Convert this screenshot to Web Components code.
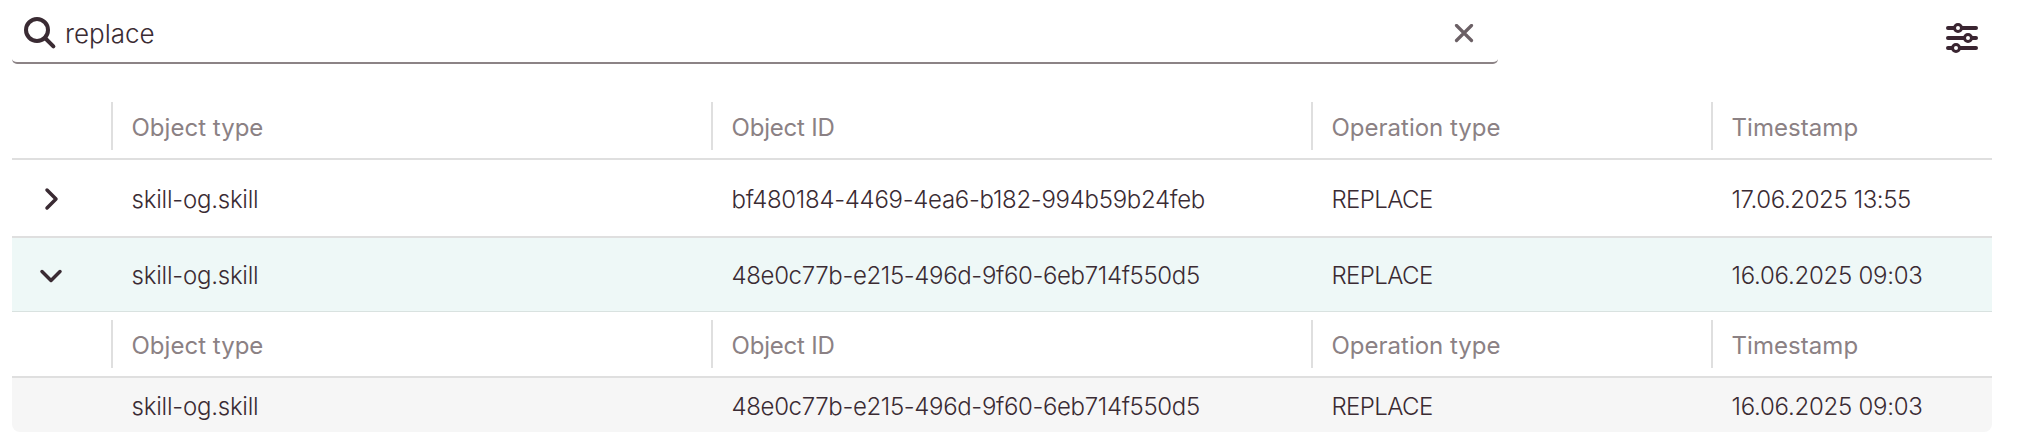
<!DOCTYPE html>
<html lang="en">
<head>
<meta charset="utf-8">
<title>Operations</title>
<style>
  body {
    margin: 0;
    padding: 0 26px 0 12px;
    background: #fff;
    color: #3a2b33;
    font: 350 24px/32px Inter, "Liberation Sans", sans-serif;
  }
</style>
</head>
<body>
<log-toolbar>
  <search-field>replace</search-field>
</log-toolbar>

<log-table>
  <log-header></log-header>
  <log-row state="closed">
    <log-text slot="type" style="--track: -0.22px">skill-og.skill</log-text>
    <log-text slot="id" style="--track: -0.29px">bf480184-4469-4ea6-b182-994b59b24feb</log-text>
    <log-text slot="operation" style="--track: -0.6px">REPLACE</log-text>
    <log-text slot="time" style="--track: -0.4px">17.06.2025 13:55</log-text>
  </log-row>
  <log-row state="open">
    <log-text slot="type" style="--track: -0.22px">skill-og.skill</log-text>
    <log-text slot="id" style="--track: -0.35px">48e0c77b-e215-496d-9f60-6eb714f550d5</log-text>
    <log-text slot="operation" style="--track: -0.6px">REPLACE</log-text>
    <log-text slot="time" style="--track: -0.25px">16.06.2025 09:03</log-text>
  </log-row>
  <log-header nested></log-header>
  <log-row nested>
    <log-text slot="type" style="--track: -0.22px">skill-og.skill</log-text>
    <log-text slot="id" style="--track: -0.35px">48e0c77b-e215-496d-9f60-6eb714f550d5</log-text>
    <log-text slot="operation" style="--track: -0.6px">REPLACE</log-text>
    <log-text slot="time" style="--track: -0.25px">16.06.2025 09:03</log-text>
  </log-row>
</log-table>

<script>
// Shared column widths for headers and rows
const columns = "99px 600px 600px 400px 1fr";

class SearchField extends HTMLElement {
  connectedCallback() {
    const shadow = this.attachShadow({ mode: "open" });
    shadow.innerHTML = `
      <style>
        :host {
          display: flex;
          align-items: center;
          box-sizing: border-box;
          width: 1486px;
          height: 64px;
          padding: 6px 24px 0 10px;
          border-bottom: 2px solid #8c8386;
          border-radius: 0 0 5px 5px;
        }

        .value {
          flex: 1;
          padding-left: 7px;
          font-size: 26px;
          font-weight: 300;
          letter-spacing: 0;
        }

        svg {
          display: block;
          fill: none;
          stroke-linecap: round;
        }

        .search {
          stroke: #3a2b33;
          stroke-width: 4;
        }

        .clear {
          stroke: #6b6065;
          stroke-width: 3.2;
        }
      </style>
      <svg class="search" width="36" height="36" viewBox="0 0 36 36">
        <circle cx="15" cy="14" r="11"/>
        <path d="M23 22L31.4 30.4"/>
      </svg>
      <span class="value"><slot></slot></span>
      <svg class="clear" width="20" height="20" viewBox="0 0 20 20">
        <path d="M2.5 1.5L17.5 16.5M17.5 1.5L2.5 16.5"/>
      </svg>
    `;
  }
}

class LogToolbar extends HTMLElement {
  connectedCallback() {
    const shadow = this.attachShadow({ mode: "open" });
    shadow.innerHTML = `
      <style>
        :host {
          display: flex;
          justify-content: space-between;
          align-items: center;
          height: 64px;
          margin-bottom: 30px;
          padding-right: 12px;
        }

        svg {
          display: block;
          margin-top: 12px;
          fill: #fff;
          stroke: #3a2531;
          stroke-width: 4;
          stroke-linecap: round;
        }

        circle {
          stroke-width: 3;
        }
      </style>
      <slot></slot>
      <svg width="36" height="32" viewBox="0 0 36 32">
        <path d="M4 6H32M4 16H32M4 26H32"/>
        <circle cx="14" cy="6" r="3.5"/>
        <circle cx="24" cy="16" r="3.5"/>
        <circle cx="12" cy="26" r="3.5"/>
      </svg>
    `;
  }
}

class LogTable extends HTMLElement {
  connectedCallback() {
    const shadow = this.attachShadow({ mode: "open" });
    shadow.innerHTML = `
      <style>
        :host {
          display: flex;
          flex-direction: column;
        }
      </style>
      <slot></slot>
    `;
  }
}

class LogHeader extends HTMLElement {
  connectedCallback() {
    const shadow = this.attachShadow({ mode: "open" });
    shadow.innerHTML = `
      <style>
        :host {
          display: grid;
          grid-template-columns: ${columns};
          align-items: center;
          box-sizing: border-box;
          height: 66px;
          border-bottom: 2px solid #dfdfdf;
          color: #8b8184;
          font-weight: 400;
        }

        .title {
          box-sizing: border-box;
          height: 48px;
          padding: 10px 0 0 18.5px;
          border-left: 2px solid #dfdfdf;
          line-height: 32px;
          white-space: nowrap;
        }
      </style>
      <span></span>
      <span class="title" style="letter-spacing: 0.02px">Object type</span>
      <span class="title" style="letter-spacing: -0.2px">Object ID</span>
      <span class="title" style="letter-spacing: 0">Operation type</span>
      <span class="title" style="letter-spacing: 0.06px">Timestamp</span>
    `;
  }
}

class LogRow extends HTMLElement {
  connectedCallback() {
    const shadow = this.attachShadow({ mode: "open" });
    const arrows = {
      closed: "M11 7L20 16L11 25",
      open: "M6 12.5L15 21.5L24 12.5"
    };
    const arrow = arrows[this.getAttribute("state")];
    shadow.innerHTML = `
      <style>
        :host {
          display: grid;
          grid-template-columns: ${columns};
          align-items: center;
          box-sizing: border-box;
          height: 78px;
          padding-top: 2px;
          border-bottom: 2px solid #dfdfdf;
        }

        :host([state="open"]) {
          height: 74px;
          padding-top: 0;
          background: #eef8f7;
          border-bottom: 1px solid #d9e2e0;
        }

        :host([nested]) {
          height: 54px;
          background: #f6f6f6;
          border: 0;
          border-radius: 0 0 8px 8px;
        }

        .toggle {
          padding-left: 24px;
        }

        svg {
          display: block;
          fill: none;
          stroke: #3a2b33;
          stroke-width: 3.5;
          stroke-linecap: round;
          stroke-linejoin: round;
        }
      </style>
      <span class="toggle">${arrow ? `<svg width="32" height="32" viewBox="0 0 32 32"><path d="${arrow}"/></svg>` : ""}</span>
      <slot name="type"></slot>
      <slot name="id"></slot>
      <slot name="operation"></slot>
      <slot name="time"></slot>
    `;
  }
}

class LogText extends HTMLElement {
  connectedCallback() {
    const shadow = this.attachShadow({ mode: "open" });
    shadow.innerHTML = `
      <style>
        :host {
          display: block;
          padding: 2px 0 0 20.5px;
          letter-spacing: var(--track, 0);
          white-space: nowrap;
        }
      </style>
      <slot></slot>
    `;
  }
}

customElements.define("search-field", SearchField);
customElements.define("log-toolbar", LogToolbar);
customElements.define("log-table", LogTable);
customElements.define("log-header", LogHeader);
customElements.define("log-row", LogRow);
customElements.define("log-text", LogText);
</script>
</body>
</html>
